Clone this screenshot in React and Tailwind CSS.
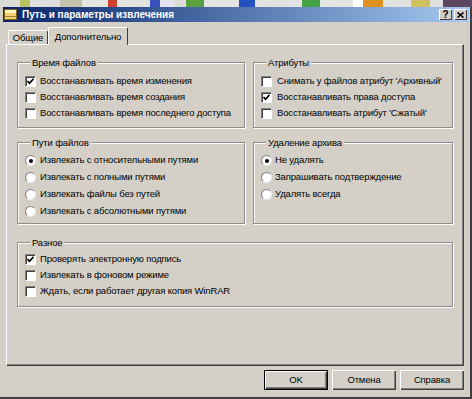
import React from 'react';

const strip = [
  ['w-[20px]', 'bg-[#dcdcd6]'],
  ['w-[10px]', 'bg-[#b9c064]'],
  ['w-[30px]', 'bg-[#dedede]'],
  ['w-[22px]', 'bg-[#c4c2ae]'],
  ['w-[26px]', 'bg-[#e4e4e0]'],
  ['w-[9px]', 'bg-[#d04030]'],
  ['w-[33px]', 'bg-[#e2e2de]'],
  ['w-[10px]', 'bg-[#3652c0]'],
  ['w-[14px]', 'bg-[#e4e4f0]'],
  ['w-[12px]', 'bg-[#dcdcd8]'],
  ['w-[18px]', 'bg-[#58a040]'],
  ['w-[35px]', 'bg-[#e4e4e2]'],
  ['w-[16px]', 'bg-[#2450c0]'],
  ['w-[47px]', 'bg-[#e2e2e0]'],
  ['w-[18px]', 'bg-[#44a244]'],
  ['w-[33px]', 'bg-[#e4e4e2]'],
  ['w-[10px]', 'bg-[#ffffff]'],
  ['w-[20px]', 'bg-[#e09020]'],
  ['w-[28px]', 'bg-[#e2e2e0]'],
  ['w-[19px]', 'bg-[#d0c060]'],
  ['w-[13px]', 'bg-[#e0e0de]'],
  ['w-[30px]', 'bg-[#5c4660]'],
];

const Check = ({ checked }) => (
  <span className="w-[11px] h-[11px] shrink-0 bg-white border border-t-[#808080] border-l-[#808080] border-r-white border-b-white shadow-[inset_1px_1px_0_#404040] flex items-center justify-center">
    {checked && (
      <svg width="7" height="7" viewBox="0 0 7 7">
        <path d="M0.5 3 L2.5 5.2 L6.5 0.8" stroke="#000" strokeWidth="1.7" fill="none" />
      </svg>
    )}
  </span>
);

const Radio = ({ checked }) => (
  <span className="w-[11px] h-[11px] shrink-0 rounded-full bg-white border border-t-[#808080] border-l-[#808080] border-r-[#e8e8e8] border-b-[#e8e8e8] flex items-center justify-center">
    {checked && <span className="w-[4px] h-[4px] rounded-full bg-black" />}
  </span>
);

const Row = ({ h, children, label, gap }) => (
  <div className={`flex items-center whitespace-nowrap ${h}`}>
    {children}
    <span className={gap}>{label}</span>
  </div>
);

const Group = ({ title, className, children }) => (
  <fieldset className={`border border-[#8c8c8c] shadow-[inset_1px_1px_0_#fff,1px_1px_0_#fff] ${className}`}>
    <legend className="ml-[5px] px-[2px] leading-[13px] bg-[#d4d0c8]">{title}</legend>
    {children}
  </fieldset>
);

const Btn = ({ children, def }) => (
  <button
    className={
      def
        ? 'w-[64px] h-[20px] border border-black bg-[#d4d0c8] shadow-[inset_1px_1px_0_#fff,inset_-1px_-1px_0_#404040,inset_-2px_-2px_0_#808080] flex items-center justify-center'
        : 'w-[64px] h-[20px] bg-[#d4d0c8] shadow-[inset_1px_1px_0_#fff,inset_-1px_-1px_0_#404040,inset_-2px_-2px_0_#808080] flex items-center justify-center'
    }
  >
    {children}
  </button>
);

export default function App() {
  return (
    <div className="w-[472px] h-[399px] overflow-hidden bg-[#d4d0c8] text-[9.5px] tracking-[-0.15px] text-black font-['Liberation_Sans',Arial,sans-serif]">
      <div className="flex h-[7px]">
        {strip.map(([w, c], i) => (
          <div key={i} className={`${w} ${c} shrink-0`} />
        ))}
      </div>

      <div className="h-[392px] flex flex-col border-r-2 border-b-2 border-r-[#404040] border-b-[#404040] pl-[3px] pr-[1px]">
        {/* title bar */}
        <div className="h-[15px] flex items-center bg-linear-to-r from-[#0a246a] to-[#a6caf0] pr-[2px]">
          <svg width="14" height="13" viewBox="0 0 14 13" className="ml-[1px] shrink-0">
            <rect x="0.5" y="1.5" width="12" height="10" fill="#f0d070" stroke="#806020" />
            <rect x="1" y="2" width="11" height="3" fill="#fff4c0" />
            <rect x="1" y="8" width="11" height="1" fill="#a08030" />
          </svg>
          <span className="ml-[4px] font-bold text-[10px] tracking-normal text-white leading-[15px]">Путь и параметры извлечения</span>
          <div className="ml-auto flex gap-[2px]">
            <span className="w-[13px] h-[11px] bg-[#d4d0c8] shadow-[inset_1px_1px_0_#fff,inset_-1px_-1px_0_#404040] flex items-center justify-center font-bold text-[10px] leading-none">?</span>
            <span className="w-[13px] h-[11px] bg-[#d4d0c8] shadow-[inset_1px_1px_0_#fff,inset_-1px_-1px_0_#404040] flex items-center justify-center">
              <svg width="7" height="6" viewBox="0 0 7 6">
                <path d="M0.5 0.5 L6.5 5.5 M6.5 0.5 L0.5 5.5" stroke="#000" strokeWidth="1.6" />
              </svg>
            </span>
          </div>
        </div>

        {/* tabs */}
        <div className="mt-[5px] h-[17px] flex items-end pl-[3px]">
          <div className="ml-[2px] w-[40px] h-[14px] border-l border-t border-white border-r border-r-[#404040] rounded-t-[2px] flex items-center justify-center leading-[13px]">
            Общие
          </div>
          <div className="relative z-10 -mb-[1px] w-[80px] h-[18px] bg-[#d4d0c8] border-l border-t border-white border-r border-r-[#404040] rounded-t-[2px] flex items-center justify-center leading-[13px]">
            Дополнительно
          </div>
        </div>

        {/* panel */}
        <div className="ml-[3px] w-[458px] h-[322px] border-l border-t border-white border-r border-b border-r-[#404040] border-b-[#404040] shadow-[inset_-1px_-1px_0_#808080] pl-[10px] pt-[11px]">
          <div className="grid grid-cols-[228px_200px] gap-x-[8px] gap-y-[8px]">
            <Group title="Время файлов" className="h-[72px] pl-[7px] pt-[4px]">
              <Row h="h-[16px]" gap="ml-[4px]" label="Восстанавливать время изменения"><Check checked /></Row>
              <Row h="h-[16px]" gap="ml-[4px]" label="Восстанавливать время создания"><Check /></Row>
              <Row h="h-[16px]" gap="ml-[4px]" label="Восстанавливать время последнего доступа"><Check /></Row>
            </Group>
            <Group title="Атрибуты" className="h-[72px] pl-[7px] pt-[4px]">
              <Row h="h-[16px]" gap="ml-[5px]" label="Снимать у файлов атрибут 'Архивный'"><Check /></Row>
              <Row h="h-[16px]" gap="ml-[5px]" label="Восстанавливать права доступа"><Check checked /></Row>
              <Row h="h-[16px]" gap="ml-[5px]" label="Восстанавливать атрибут 'Сжатый'"><Check /></Row>
            </Group>
            <Group title="Пути файлов" className="h-[88px] pl-[7px] pt-[3px]">
              <Row h="h-[17px]" gap="ml-[4px]" label="Извлекать с относительными путями"><Radio checked /></Row>
              <Row h="h-[17px]" gap="ml-[4px]" label="Извлекать с полными путями"><Radio /></Row>
              <Row h="h-[17px]" gap="ml-[4px]" label="Извлекать файлы без путей"><Radio /></Row>
              <Row h="h-[17px]" gap="ml-[4px]" label="Извлекать с абсолютными путями"><Radio /></Row>
            </Group>
            <Group title="Удаление архива" className="h-[88px] pl-[7px] pt-[3px]">
              <Row h="h-[17px]" gap="ml-[3px]" label="Не удалять"><Radio checked /></Row>
              <Row h="h-[17px]" gap="ml-[3px]" label="Запрашивать подтверждение"><Radio /></Row>
              <Row h="h-[17px]" gap="ml-[3px]" label="Удалять всегда"><Radio /></Row>
            </Group>
            <Group title="Разное" className="col-span-2 mt-[4px] h-[71px] pl-[7px] pt-[2px]">
              <Row h="h-[16px]" gap="ml-[4px]" label="Проверять электронную подпись"><Check checked /></Row>
              <Row h="h-[16px]" gap="ml-[4px]" label="Извлекать в фоновом режиме"><Check /></Row>
              <Row h="h-[16px]" gap="ml-[4px]" label="Ждать, если работает другая копия WinRAR"><Check /></Row>
            </Group>
          </div>
        </div>

        {/* buttons */}
        <div className="mt-[4px] flex justify-end gap-[4px] pr-[5px]">
          <Btn def>OK</Btn>
          <Btn>Отмена</Btn>
          <Btn>Справка</Btn>
        </div>
      </div>
    </div>
  );
}
